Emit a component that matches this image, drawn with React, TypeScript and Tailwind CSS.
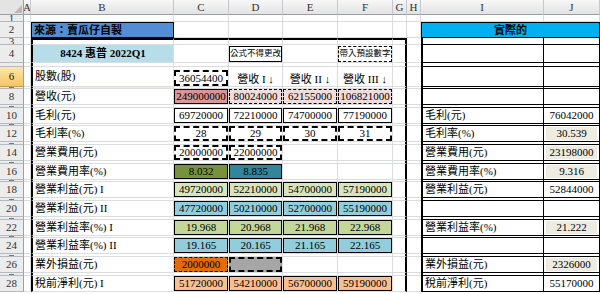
import React from "react";

type Col = "A" | "B" | "C" | "D" | "E" | "F" | "G" | "H" | "I" | "J";
const COLS: Col[] = ["A", "B", "C", "D", "E", "F", "G", "H", "I", "J"];

const W: Record<Col, string> = {
  A: "w-[7px]",
  B: "w-[143px]",
  C: "w-[55px]",
  D: "w-[54px]",
  E: "w-[55px]",
  F: "w-[55px]",
  G: "w-[14px]",
  H: "w-[14px]",
  I: "w-[123px]",
  J: "w-[56px]",
};

const ROW_H: Record<number, string> = {
  1: "h-[7px]", 2: "h-[16px]", 3: "h-[7px]", 4: "h-[18px]", 5: "h-[4px]", 6: "h-[20px]", 7: "h-[2px]",
  8: "h-[16px]", 9: "h-[3px]", 10: "h-[16px]", 11: "h-[2px]", 12: "h-[16px]", 13: "h-[3px]",
  14: "h-[16px]", 15: "h-[3px]", 16: "h-[16px]", 17: "h-[2px]", 18: "h-[16px]", 19: "h-[3px]",
  20: "h-[16px]", 21: "h-[3px]", 22: "h-[16px]", 23: "h-[2px]", 24: "h-[16px]", 25: "h-[3px]",
  26: "h-[16px]", 27: "h-[3px]", 28: "h-[16px]",
};

type BoxSpec = { v: string; bg: string; dash?: 1 | 2 };

// B column labels
const labels: Record<number, string> = {
  6: "股數(股)",
  8: "營收(元)",
  10: "毛利(元)",
  12: "毛利率(%)",
  14: "營業費用(元)",
  16: "營業費用率(%)",
  18: "營業利益(元) I",
  20: "營業利益(元) II",
  22: "營業利益率(%) I",
  24: "營業利益率(%) II",
  26: "業外損益(元)",
  28: "稅前淨利(元) I",
};

const row = (vals: string[], bg: string, dash?: 1 | 2): (BoxSpec | null)[] =>
  vals.map((v) => ({ v, bg, dash }));

// C..F boxes
const boxes: Record<number, (BoxSpec | null)[]> = {
  8: [
    { v: "249000000", bg: "bg-[#da9694]" },
    ...row(["80024000", "62155000", "106821000"], "bg-[#f2dcdb]", 1),
  ],
  10: row(["69720000", "72210000", "74700000", "77190000"], "bg-white"),
  12: row(["28", "29", "30", "31"], "bg-white", 2),
  14: row(["20000000", "22000000"], "bg-white", 2),
  16: [
    { v: "8.032", bg: "bg-[#76933c]" },
    { v: "8.835", bg: "bg-[#31869b]" },
  ],
  18: row(["49720000", "52210000", "54700000", "57190000"], "bg-[#d8e4bc]"),
  20: row(["47720000", "50210000", "52700000", "55190000"], "bg-[#92cddc]"),
  22: row(["19.968", "20.968", "21.968", "22.968"], "bg-[#c4d79b]"),
  24: row(["19.165", "20.165", "21.165", "22.165"], "bg-[#92cddc]"),
  26: [
    { v: "2000000", bg: "bg-[#e26b0a]", dash: 1 },
    { v: "", bg: "bg-[#a6a6a6]", dash: 2 },
  ],
  28: row(["51720000", "54210000", "56700000", "59190000"], "bg-[#fabf8f]"),
};

// right table (actual numbers)
const actual: Record<number, [string, string, boolean]> = {
  10: ["毛利(元)", "76042000", false],
  12: ["毛利率(%)", "30.539", true],
  14: ["營業費用(元)", "23198000", true],
  16: ["營業費用率(%)", "9.316", true],
  18: ["營業利益(元)", "52844000", false],
  22: ["營業利益率(%)", "21.222", true],
  26: ["業外損益(元)", "2326000", true],
  28: ["稅前淨利(元)", "55170000", false],
};

function Box({ spec }: { spec: BoxSpec }) {
  const border =
    spec.dash === 2
      ? "border-2 border-dashed border-black"
      : spec.dash === 1
      ? "border border-dashed border-black"
      : "border border-black";
  return (
    <div className={`h-full w-full flex items-center justify-center whitespace-nowrap ${border} ${spec.bg}`}>
      {spec.v}
    </div>
  );
}

function Cell({ r, c, className = "", children }: { r: number; c: Col; className?: string; children?: React.ReactNode }) {
  let left = "";
  let top = "";
  let right = "border-r border-r-[#dadcdd]";
  let bottom = "border-b border-b-[#dadcdd]";
  if (r >= 3) {
    if (c === "B") left = "border-l-2 border-l-black";
    if (c === "G") right = "border-r-2 border-r-black";
    if (c === "H") right = "";
    if (c === "I") {
      left = "border-l-2 border-l-black";
      right = "border-r border-r-black";
      bottom = "border-b border-b-black";
    }
    if (c === "J") {
      right = "border-r border-r-black";
      bottom = "border-b border-b-black";
    }
  }
  if (r === 3 && "BCDEFG".includes(c)) top = "border-t-2 border-t-black";
  return (
    <div className={`${W[c]} h-full flex-none ${left} ${top} ${right} ${bottom} ${className}`}>{children}</div>
  );
}

function RowHead({ r }: { r: number }) {
  const active = r === 6;
  const thin = r > 5 && r % 2 === 1;
  return (
    <div
      className={`w-[24px] h-full flex-none flex items-center justify-center overflow-hidden border-r border-b text-[11px] leading-none ${
        active
          ? "bg-linear-to-b from-[#fce7a8] to-[#f4c562] border-b-[#c69c46] border-r-[#c69c46] text-[#2a2000]"
          : "bg-[#ececec] border-b-[#b5bac2] border-r-[#9aa0a8] text-[#333]"
      }`}
    >
      {r === 5 ? null : thin ? <div className="h-[1px] w-[5px] bg-[#777]" /> : r}
    </div>
  );
}

function SheetRow({ r }: { r: number }) {
  const cells: React.ReactNode[] = [];
  for (const c of COLS) {
    if (r === 2 && c === "B") {
      cells.push(
        <div key={c} className="w-[143px] h-full flex-none border border-black bg-[#538dd5] flex items-center pl-[2px] font-bold whitespace-nowrap">
          來源：賣瓜仔自製
        </div>
      );
      continue;
    }
    if (r === 2 && c === "I") {
      cells.push(
        <div key={c} className="w-[179px] h-full flex-none border border-black bg-[#00b0f0] flex items-center justify-center font-bold">
          實際的
        </div>
      );
      continue;
    }
    if (r === 2 && c === "J") continue;

    let node: React.ReactNode = null;
    let cls = "";

    if (c === "B") {
      if (r === 4) {
        cls = "bg-[#b7dee8] flex items-center justify-center font-bold whitespace-nowrap";
        node = "8424 惠普 2022Q1";
      } else if (r === 7) {
        cls = "bg-[#eeece1]";
      } else if (labels[r]) {
        cls = "flex items-center pl-[2px] whitespace-nowrap";
        node = labels[r];
      }
    }

    if (r === 4 && c === "D") {
      cls = "flex items-center";
      node = (
        <div className="h-[16px] w-full border border-black bg-white flex items-center justify-center text-[8.5px] whitespace-nowrap">
          公式不得更改
        </div>
      );
    }
    if (r === 4 && c === "F") {
      cls = "flex items-center";
      node = (
        <div className="h-[16px] w-full border border-dashed border-black bg-white flex items-center justify-center text-[8.5px] whitespace-nowrap">
          帶入預設數字
        </div>
      );
    }

    if (r === 6) {
      if (c === "C") {
        cls = "flex items-end";
        node = (
          <div className="h-[16px] w-full border-2 border-dashed border-black flex items-center justify-center">36054400</div>
        );
      }
      if (c === "D" || c === "E" || c === "F") {
        cls = "flex items-end justify-center pb-[1px] whitespace-nowrap";
        node = c === "D" ? "營收 I ↓" : c === "E" ? "營收 II ↓" : "營收 III ↓";
      }
    }

    const idx = "CDEF".indexOf(c);
    if (idx >= 0 && boxes[r] && boxes[r][idx]) {
      node = <Box spec={boxes[r][idx] as BoxSpec} />;
    }

    if (actual[r] && c === "I") {
      cls = "flex items-center pl-[2px] whitespace-nowrap";
      node = actual[r][0];
    }
    if (actual[r] && c === "J") {
      const [, v, beige] = actual[r];
      cls = "px-[2px] py-[1px]";
      node = (
        <div className={`h-full w-full flex items-center justify-center ${beige ? "bg-[#eeece1]" : ""}`}>{v}</div>
      );
    }

    cells.push(
      <Cell key={c} r={r} c={c} className={cls}>
        {node}
      </Cell>
    );
  }
  return (
    <div className={`flex ${ROW_H[r]}`}>
      <RowHead r={r} />
      {cells}
    </div>
  );
}

export default function App() {
  const rows = Array.from({ length: 28 }, (_, i) => i + 1);
  return (
    <div className="w-[600px] h-[294px] overflow-hidden bg-white text-black text-[11px] leading-none font-['Liberation_Serif','Noto_Sans_CJK_TC',serif]">
      <div className="flex h-[15px]">
        <div className="w-[24px] flex-none bg-[#e4e4e4] border-r border-b border-r-[#9aa0a8] border-b-[#9aa0a8] flex items-end justify-end pr-[1px] pb-[1px]">
          <svg width="8" height="8" viewBox="0 0 8 8">
            <path d="M8 0 L8 8 L0 8Z" fill="#b9b9b9" />
          </svg>
        </div>
        {COLS.map((c) => (
          <div
            key={c}
            className={`${W[c]} flex-none bg-linear-to-b from-[#f7f7f7] to-[#e3e3e3] border-r border-b border-r-[#c5c9ce] border-b-[#9aa0a8] flex items-center justify-center text-[#333] overflow-hidden`}
          >
            {c}
          </div>
        ))}
      </div>
      {rows.map((r) => (
        <SheetRow key={r} r={r} />
      ))}
    </div>
  );
}
